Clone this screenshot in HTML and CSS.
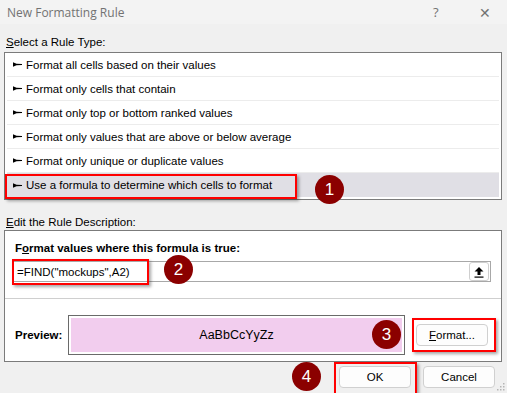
FILE: index.html
```html
<!DOCTYPE html>
<html lang="en">
<head>
  <meta charset="UTF-8">
  <title>New Formatting Rule</title>
  <link rel="stylesheet" href="styles.css">
</head>
<body>
  <div class="dialog">
    <div class="titlebar">
      <span class="title">New Formatting Rule</span>
      <span class="help">?</span>
      <span class="close">&#x2715;</span>
    </div>

    <div class="content">
      <div class="section-label"><u>S</u>elect a Rule Type:</div>
      <ul class="rule-list">
        <li class="rule"><svg class="bullet" viewBox="0 0 9 5"><path d="M0 0.2 L3.5 1.8 L9 2.1 L9 2.9 L3.5 3.2 L0 4.8 Z"/></svg>Format all cells based on their values</li>
        <li class="rule"><svg class="bullet" viewBox="0 0 9 5"><path d="M0 0.2 L3.5 1.8 L9 2.1 L9 2.9 L3.5 3.2 L0 4.8 Z"/></svg>Format only cells that contain</li>
        <li class="rule"><svg class="bullet" viewBox="0 0 9 5"><path d="M0 0.2 L3.5 1.8 L9 2.1 L9 2.9 L3.5 3.2 L0 4.8 Z"/></svg>Format only top or bottom ranked values</li>
        <li class="rule"><svg class="bullet" viewBox="0 0 9 5"><path d="M0 0.2 L3.5 1.8 L9 2.1 L9 2.9 L3.5 3.2 L0 4.8 Z"/></svg>Format only values that are above or below average</li>
        <li class="rule"><svg class="bullet" viewBox="0 0 9 5"><path d="M0 0.2 L3.5 1.8 L9 2.1 L9 2.9 L3.5 3.2 L0 4.8 Z"/></svg>Format only unique or duplicate values</li>
        <li class="rule selected"><svg class="bullet" viewBox="0 0 9 5"><path d="M0 0.2 L3.5 1.8 L9 2.1 L9 2.9 L3.5 3.2 L0 4.8 Z"/></svg>Use a formula to determine which cells to format</li>
      </ul>

      <div class="section-label second"><u>E</u>dit the Rule Description:</div>
      <div class="desc-box">
        <div class="desc-title">F<u>o</u>rmat values where this formula is true:</div>
        <div class="formula-input">
          <span class="formula">=FIND("mockups",A2)</span>
          <button class="collapse">
            <svg viewBox="0 0 10 12" width="10" height="12"><path d="M5 1 L9.5 5.5 L6.5 5.5 L6.5 9 L3.5 9 L3.5 5.5 L0.5 5.5 Z"/><rect x="0.5" y="10.5" width="9" height="1.2"/></svg>
          </button>
        </div>
        <div class="divider"></div>
        <div class="preview-row">
          <span class="preview-label">Preview:</span>
          <div class="preview-box">
            <div class="preview-fill">AaBbCcYyZz</div>
          </div>
          <button class="btn format-btn"><u>F</u>ormat...</button>
        </div>
      </div>

      <div class="footer">
        <button class="btn">OK</button>
        <button class="btn">Cancel</button>
      </div>
    </div>

    <!-- callouts drawn over the dialog -->
    <div class="mark mark-1"></div>
    <div class="mark mark-2"></div>
    <div class="mark mark-3"></div>
    <div class="mark mark-4"></div>
    <div class="step step-1">1</div>
    <div class="step step-2">2</div>
    <div class="step step-3">3</div>
    <div class="step step-4">4</div>

    <svg class="grip" viewBox="0 0 8 8" width="8" height="8">
      <rect x="6" y="0" width="1.5" height="1.5"/>
      <rect x="3" y="3" width="1.5" height="1.5"/>
      <rect x="6" y="3" width="1.5" height="1.5"/>
      <rect x="0" y="6" width="1.5" height="1.5"/>
      <rect x="3" y="6" width="1.5" height="1.5"/>
      <rect x="6" y="6" width="1.5" height="1.5"/>
    </svg>
  </div>
</body>
</html>
```

FILE: styles.css
```css
body {
  margin: 0;
  font-family: "Liberation Sans", Arial, sans-serif;
  font-size: 11.5px;
  color: #000;
}

.dialog {
  position: relative;
  width: 507px;
  height: 393px;
  background: #f0f0f0;
  overflow: hidden;
}

.titlebar {
  display: flex;
  align-items: center;
  height: 24px;
  padding-left: 7px;
  background: #f3f3f3;
  color: #727272;
  font-family: "Open Sans", sans-serif;
  font-size: 12px;
}

.title {
  flex: 1;
}

.help {
  width: 46px;
  font-size: 13px;
}

.close {
  width: 28px;
  font-size: 14px;
}

.content {
  padding: 0 5px 0 4px;
}

.section-label {
  padding: 11px 0 3px 2px;
  line-height: 14px;
}

.section-label.second {
  padding: 15px 0 1px 2px;
}

.rule-list {
  list-style: none;
  margin: 0;
  padding: 0 2px 2px;
  background: #fff;
  border: 1px solid #7b7b7b;
}

.rule {
  display: flex;
  align-items: center;
  height: 23px;
  padding-left: 6px;
  border-bottom: 1px solid #ececec;
}

.rule.selected {
  height: 24px;
  border-bottom: none;
  background: #e0dfe5;
}

.bullet {
  width: 9px;
  height: 5px;
  margin-right: 4px;
  fill: #000;
}

.desc-box {
  background: #fff;
  border: 1px solid #7b7b7b;
  padding-bottom: 6px;
}

.desc-title {
  padding: 10px 0 0 10px;
  line-height: 14px;
  font-weight: bold;
}

.formula-input {
  display: flex;
  align-items: center;
  height: 19px;
  margin: 6px 10px 0 7px;
  padding-left: 4px;
  border: 1px solid #a8a8a8;
}

.formula {
  flex: 1;
}

.collapse {
  display: flex;
  align-items: center;
  justify-content: center;
  width: 20px;
  height: 19px;
  padding: 0;
  margin-right: 1px;
  background: #fff;
  border: 1px solid #cfcfcf;
  border-radius: 3px;
}

.divider {
  height: 1px;
  margin-top: 16px;
  background: #cfcfcf;
}

.preview-row {
  display: flex;
  align-items: center;
  margin-top: 16px;
  padding-left: 10px;
}

.preview-label {
  width: 53px;
  font-weight: bold;
}

.preview-box {
  width: 337px;
  height: 38px;
  padding: 2px;
  box-sizing: border-box;
  height: 40px;
  border: 1px solid #6a6a6a;
}

.preview-fill {
  display: flex;
  align-items: center;
  justify-content: center;
  height: 100%;
  background: #f2cdee;
  font-size: 12.5px;
}

.btn {
  height: 22px;
  width: 72px;
  padding: 0;
  font-family: inherit;
  font-size: 11.5px;
  color: #000;
  background: #fdfdfd;
  border: 1px solid #d0d0d0;
  border-radius: 4px;
}

.format-btn {
  margin-left: 11px;
}

.footer {
  display: flex;
  justify-content: flex-end;
  gap: 12px;
  padding: 4px 7px 0 0;
}

.mark {
  position: absolute;
  border: 2px solid #f00;
  box-sizing: border-box;
  box-shadow: 2px 2px 3px rgba(0, 0, 0, 0.35);
}

.mark-1 { left: 5px; top: 174px; width: 292px; height: 25px; }
.mark-2 { left: 12px; top: 259px; width: 137px; height: 26px; }
.mark-3 { left: 412px; top: 318px; width: 84px; height: 34px; }
.mark-4 { left: 334px; top: 362px; width: 83px; height: 33px; }

.step {
  position: absolute;
  width: 29px;
  height: 29px;
  border-radius: 50%;
  background: #8b0000;
  color: #fff;
  font-size: 17px;
  line-height: 29px;
  text-align: center;
}

.step-1 { left: 315px; top: 175px; }
.step-2 { left: 164px; top: 255px; }
.step-3 { left: 372px; top: 320px; }
.step-4 { left: 292px; top: 362px; }

.grip {
  position: absolute;
  right: 2px;
  bottom: 2px;
  fill: #b5b5b5;
}
```
